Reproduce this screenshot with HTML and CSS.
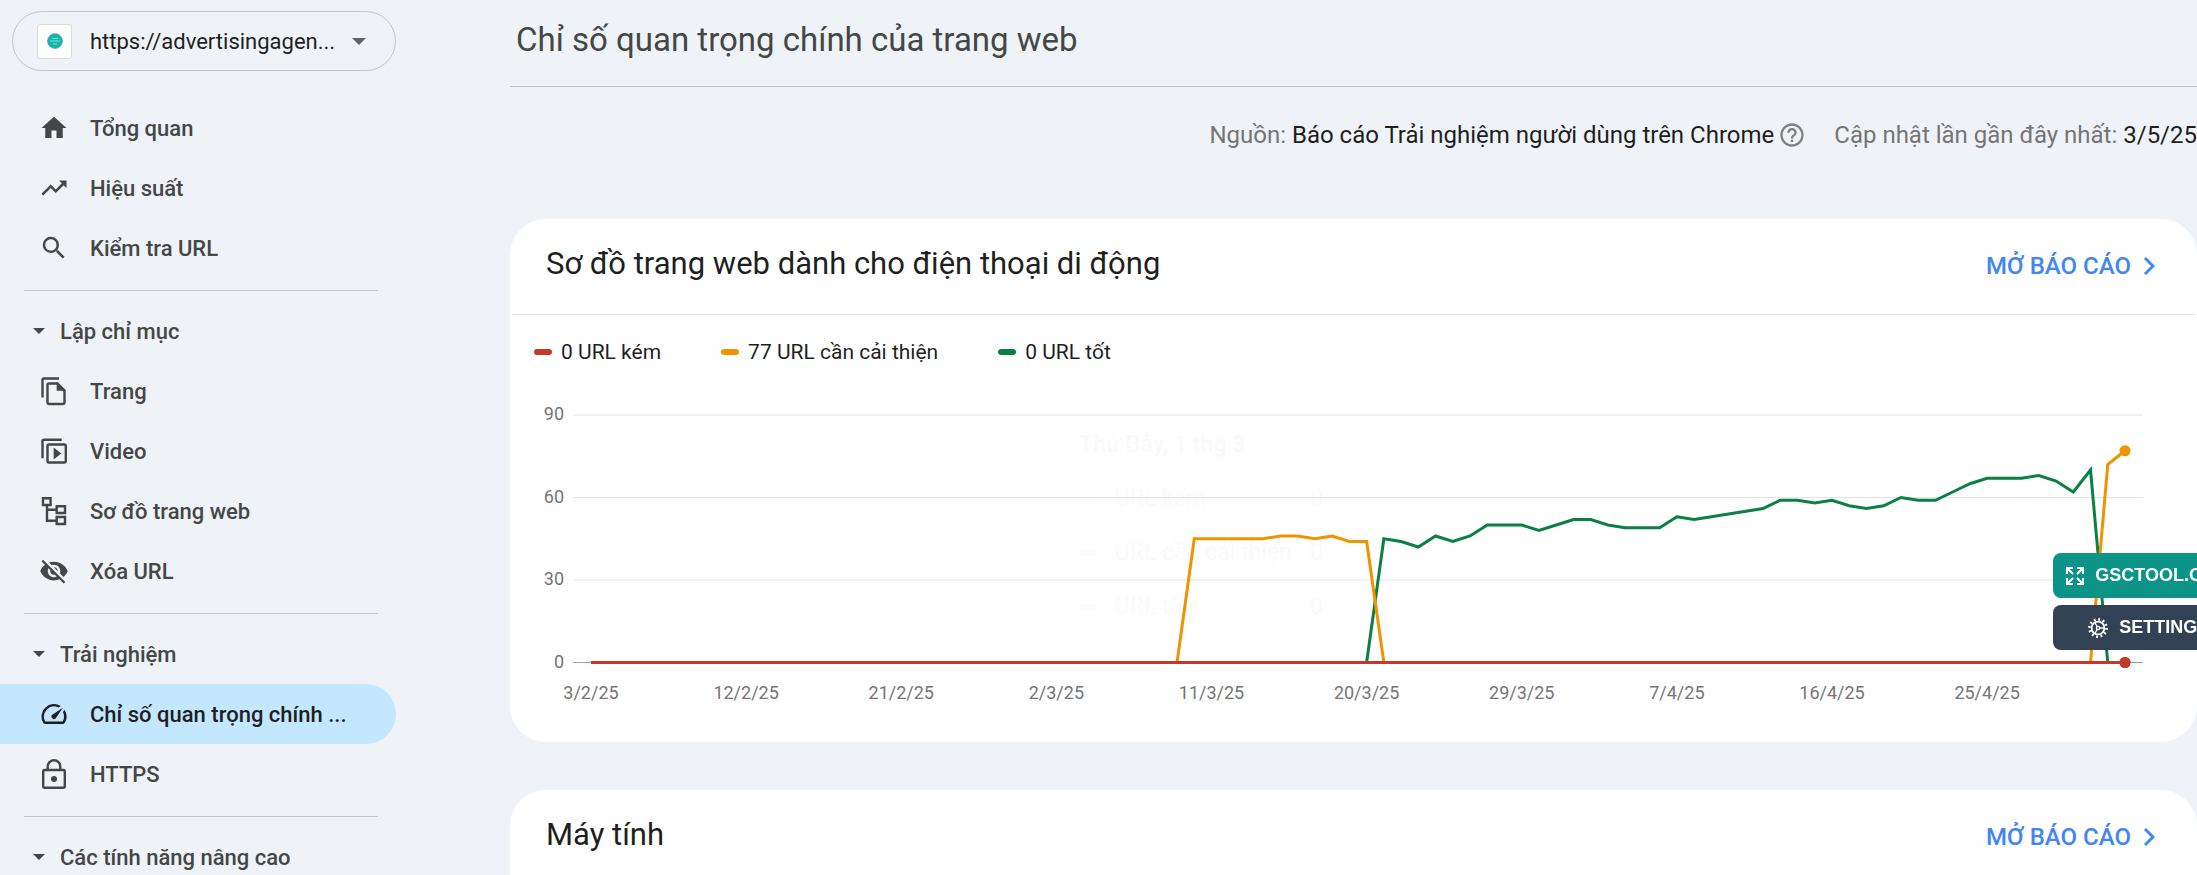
FILE: index.html
```html
<!DOCTYPE html>
<html lang="vi">
<head>
    <meta charset="utf-8">
    <title>Chỉ số quan trọng chính của trang web</title>
    <link rel="stylesheet" href="styles.css">
</head>
<body>
    <div class="layout">
        <aside class="sidebar">
            <button class="property" type="button">
                <span class="favicon">
                    <svg width="16" height="16" viewBox="0 0 16 16"><circle cx="8" cy="8" r="7.5" fill="#12b8a6" stroke="#7c9fd0" stroke-width="0.8"/><path d="M3 8h10M5 5.5h6M6 11h4" stroke="#7fe0d6" stroke-width="1"/></svg>
                </span>
                <span class="property-name">https://advertisingagen...</span>
                <span class="caret"></span>
            </button>

            <nav>
                <ul>
                    <li><a href="#"><svg class="icon" viewBox="0 0 24 24"><path d="M10 20v-6h4v6h5v-8h3L12 3 2 12h3v8z"/></svg>Tổng quan</a></li>
                    <li><a href="#"><svg class="icon" viewBox="0 0 24 24"><path d="M16 6l2.29 2.29-4.88 4.88-4-4L2 16.59 3.41 18l6-6 4 4 6.3-6.29L22 12V6z"/></svg>Hiệu suất</a></li>
                    <li><a href="#"><svg class="icon" viewBox="0 0 24 24"><path d="M15.5 14h-.79l-.28-.27A6.47 6.47 0 0 0 16 9.5 6.5 6.5 0 1 0 9.5 16c1.61 0 3.09-.59 4.23-1.57l.27.28v.79l5 4.99L20.49 19l-4.99-5zm-6 0C7.01 14 5 11.99 5 9.5S7.01 5 9.5 5 14 7.01 14 9.5 11.99 14 9.5 14z"/></svg>Kiểm tra URL</a></li>
                </ul>
                <hr>
                <button class="group" type="button"><span class="caret small"></span>Lập chỉ mục</button>
                <ul>
                    <li><a href="#"><svg class="icon line" viewBox="0 0 30 30"><path d="M20 2.5H5A1.5 1.5 0 0 0 3.5 4v17.5"/><path d="M18.5 7.5H10A1.5 1.5 0 0 0 8.5 9v17.5A1.5 1.5 0 0 0 10 28h14a1.5 1.5 0 0 0 1.5-1.5V14.5z"/><path class="solid" d="M17.7 6.5v8.2h8.5z"/></svg>Trang</a></li>
                    <li><a href="#"><svg class="icon line" viewBox="0 0 30 30"><path d="M22.7 3.8H5A1.5 1.5 0 0 0 3.5 5.3v17"/><rect x="8.5" y="8.5" width="18.3" height="18" rx="1.5"/><path class="solid" d="M14.7 11.5v12l7.6-6z"/></svg>Video</a></li>
                    <li><a href="#"><svg class="icon line" viewBox="0 0 30 30"><path d="M4 2.3h7.6v6.7H4zM17.7 10.3h8.3v6.7h-8.3zM17.7 21h8.3v7h-8.3zM8 9v15.7h9.7M8 13.7h9.7"/></svg>Sơ đồ trang web</a></li>
                    <li><a href="#"><svg class="icon" viewBox="0 0 24 24"><path d="M12 7c2.76 0 5 2.24 5 5 0 .65-.13 1.26-.36 1.83l2.92 2.92c1.51-1.26 2.7-2.89 3.43-4.75-1.73-4.39-6-7.5-11-7.5-1.4 0-2.74.25-3.98.7l2.16 2.16C10.74 7.13 11.35 7 12 7zM2 4.27l2.28 2.28.46.46A11.8 11.8 0 0 0 1 12c1.73 4.39 6 7.5 11 7.5 1.55 0 3.03-.3 4.38-.84l.42.42L19.73 22 21 20.73 3.27 3 2 4.27zM7.53 9.8l1.55 1.55c-.05.21-.08.43-.08.65 0 1.66 1.34 3 3 3 .22 0 .44-.03.65-.08l1.55 1.55c-.67.33-1.41.53-2.2.53-2.76 0-5-2.24-5-5 0-.79.2-1.53.53-2.2zm4.31-.78l3.15 3.15.02-.16c0-1.66-1.34-3-3-3l-.17.01z"/></svg>Xóa URL</a></li>
                </ul>
                <hr>
                <button class="group" type="button"><span class="caret small"></span>Trải nghiệm</button>
                <ul>
                    <li><a class="active" href="#"><svg class="icon" viewBox="0 0 24 24"><path d="M20.38 8.57l-1.23 1.85a8 8 0 0 1-.22 7.58H5.07A8 8 0 0 1 15.58 6.85l1.85-1.23A10 10 0 0 0 3.35 19a2 2 0 0 0 1.72 1h13.85a2 2 0 0 0 1.74-1 10 10 0 0 0-.27-10.44zM10.59 15.41a2 2 0 0 0 2.83 0l5.66-8.49-8.49 5.66a2 2 0 0 0 0 2.83z"/></svg>Chỉ số quan trọng chính ...</a></li>
                    <li><a href="#"><svg class="icon line" viewBox="0 0 30 30"><rect x="4.2" y="11" width="21.6" height="17.8" rx="1.5"/><path d="M8.7 11V7.5a6.3 6.3 0 0 1 12.6 0V11"/><circle class="solid" cx="15" cy="20" r="3"/></svg>HTTPS</a></li>
                </ul>
                <hr>
                <button class="group" type="button"><span class="caret small"></span>Các tính năng nâng cao</button>
            </nav>
        </aside>

        <main>
            <header>
                <h1>Chỉ số quan trọng chính của trang web</h1>
            </header>

            <div class="info">
                <span>Nguồn: <b>Báo cáo Trải nghiệm người dùng trên Chrome</b></span>
                <svg class="help" viewBox="0 0 24 24"><path d="M11 18h2v-2h-2v2zm1-16C6.48 2 2 6.48 2 12s4.48 10 10 10 10-4.48 10-10S17.52 2 12 2zm0 18c-4.41 0-8-3.59-8-8s3.59-8 8-8 8 3.59 8 8-3.59 8-8 8zm0-14c-2.21 0-4 1.79-4 4h2c0-1.1.9-2 2-2s2 .9 2 2c0 2-3 1.75-3 5h2c0-2.25 3-2.5 3-5 0-2.21-1.79-4-4-4z"/></svg>
                <span>Cập nhật lần gần đây nhất: <b>3/5/25</b></span>
            </div>

            <section class="card">
                <div class="card-header">
                    <h2>Sơ đồ trang web dành cho điện thoại di động</h2>
                    <a class="open" href="#">MỞ BÁO CÁO<svg width="12" height="20" viewBox="0 0 12 20"><path d="M2 2l8 8-8 8"/></svg></a>
                </div>
                <ul class="legend">
                    <li class="poor">0 URL kém</li>
                    <li class="improve">77 URL cần cải thiện</li>
                    <li class="good">0 URL tốt</li>
                </ul>
                <div class="chart">
                    <svg id="chart"></svg>
                    <div class="tooltip">
                        <strong>Thứ Bảy, 1 thg 3</strong>
                        <p class="poor">URL kém<span>0</span></p>
                        <p class="improve">URL cần cải thiện<span>0</span></p>
                        <p class="good">URL tốt<span>0</span></p>
                    </div>
                </div>
            </section>

            <section class="card">
                <div class="card-header">
                    <h2>Máy tính</h2>
                    <a class="open" href="#">MỞ BÁO CÁO<svg width="12" height="20" viewBox="0 0 12 20"><path d="M2 2l8 8-8 8"/></svg></a>
                </div>
            </section>
        </main>
    </div>

    <div class="tools">
        <button class="tool teal" type="button">
            <svg width="18" height="18" viewBox="0 0 18 18"><path d="M1 7V1h6M11 1h6v6M17 11v6h-6M7 17H1v-6M1 1l6 6M17 1l-6 6M17 17l-6-6M1 17l6-6" fill="none" stroke="#fff" stroke-width="2"/></svg>
            GSCTOOL.COM
        </button>
        <button class="tool dark" type="button">
            <svg width="20" height="20" viewBox="0 0 20 20" fill="none" stroke="#fff"><circle cx="10" cy="10" r="6.4" stroke-width="1.8"/><circle cx="10" cy="10" r="8.6" stroke-width="2.6" stroke-dasharray="1.8 2.703"/><path d="M11.5 10H16M9.2 8.7L7 4.8M9.2 11.3L7 15.2" stroke-width="1.3"/><circle cx="10" cy="10" r="1.6" stroke-width="1.2"/></svg>
            SETTINGS
        </button>
    </div>

    <script src="chart.js"></script>
</body>
</html>
```

FILE: styles.css
```css
* {
    box-sizing: border-box;
}

body {
    margin: 0;
    background-color: #eff3f8;
    color: #1f1f1f;
    font-family: Roboto, "Noto Sans", sans-serif;
    overflow: hidden;
}

ul {
    list-style: none;
    margin: 0;
    padding: 0;
}

a {
    text-decoration: none;
}

button {
    font-family: inherit;
    cursor: pointer;
}

.layout {
    display: flex;
    gap: 114px;
}

/* Sidebar */
.sidebar {
    flex: 0 0 396px;
    padding-top: 11px;
    font-size: 22px;
    color: #444746;
}

.property {
    display: flex;
    align-items: center;
    width: 384px;
    height: 60px;
    margin: 0 0 27px 12px;
    padding: 0 29px 0 24px;
    border: 1px solid #c4c7c5;
    border-radius: 30px;
    background: none;
    color: #1f1f1f;
    font-size: 22px;
}

.favicon {
    display: flex;
    align-items: center;
    justify-content: center;
    width: 35px;
    height: 35px;
    margin-right: 18px;
    background: #fff;
    border: 1px solid #dadce0;
    border-radius: 3px;
}

.property-name {
    flex: 1;
    text-align: left;
}

.caret {
    border: 7px solid transparent;
    border-top-color: #5f6368;
    border-bottom: 0;
}

.caret.small {
    border-width: 6px;
    border-bottom: 0;
    border-top-color: #444746;
}

nav a {
    display: flex;
    align-items: center;
    gap: 21px;
    height: 60px;
    padding-left: 39px;
    border-radius: 0 30px 30px 0;
    color: #444746;
    font-weight: 500;
}

nav a.active {
    background: #c2e7ff;
    color: #1f1f1f;
}

nav hr {
    height: 1px;
    margin: 12px 18px 10px 24px;
    border: 0;
    background: #c4c7c5;
}

.group {
    display: flex;
    align-items: center;
    gap: 15px;
    width: 100%;
    height: 60px;
    padding: 0 0 0 33px;
    border: 0;
    background: none;
    color: #444746;
    font-size: 22px;
    font-weight: 500;
}

.icon {
    width: 30px;
    height: 30px;
    fill: currentColor;
}

.icon.line {
    fill: none;
    stroke: currentColor;
    stroke-width: 2.4;
}

.icon .solid {
    fill: currentColor;
    stroke: none;
}

/* Content */
main {
    flex: 1;
    min-width: 0;
}

header {
    height: 87px;
    padding-left: 6px;
    border-bottom: 1px solid #c4c7c5;
}

h1 {
    margin: 0;
    font-size: 33px;
    font-weight: 400;
    line-height: 80px;
    color: #444746;
}

.info {
    display: flex;
    justify-content: flex-end;
    align-items: center;
    height: 96px;
    margin-bottom: 36px;
    white-space: nowrap;
    font-size: 24px;
    color: #757575;
}

.info b {
    font-weight: 400;
    color: #1f1f1f;
}

.help {
    width: 28px;
    height: 28px;
    margin: 0 28px 0 4px;
    fill: #808080;
}

.card {
    min-height: 300px;
    margin-bottom: 48px;
    padding: 0 2px;
    background: #fff;
    border-radius: 36px;
}

.card-header {
    display: flex;
    justify-content: space-between;
    align-items: center;
    height: 96px;
    padding: 0 40px 2px 34px;
    border-bottom: 1px solid #e0e0e0;
}

h2 {
    margin: 0;
    padding-bottom: 4px;
    font-size: 31px;
    font-weight: 400;
}

.open {
    display: flex;
    align-items: center;
    gap: 12px;
    color: #4285f4;
    font-size: 24px;
    font-weight: 500;
}

.open svg {
    fill: none;
    stroke: #4285f4;
    stroke-width: 3;
}

.legend {
    display: flex;
    gap: 60px;
    padding: 24px 22px 0;
    font-size: 21px;
    line-height: 26px;
}

.legend li {
    display: flex;
    align-items: center;
    gap: 9px;
}

.legend li::before,
.tooltip p::before {
    content: "";
    width: 18px;
    height: 6px;
    border-radius: 3px;
}

.poor::before {
    background: #c53929;
}

.improve::before {
    background: #f09300;
}

.good::before {
    background: #0b8043;
}

.chart {
    position: relative;
    height: 377px;
}

#chart {
    display: block;
    width: 100%;
    height: 100%;
    font-size: 18px;
}

#chart text {
    fill: #757575;
}

/* fading out */
.tooltip {
    position: absolute;
    left: 567px;
    top: 65px;
    width: 244px;
    opacity: 0.015;
    color: #000;
    font-size: 23px;
    line-height: 30px;
}

.tooltip p {
    display: flex;
    align-items: center;
    gap: 18px;
    margin: 24px 0 0;
}

.tooltip span {
    margin-left: auto;
}

/* Extension buttons, stick out over the right edge */
.tools {
    position: fixed;
    top: 553px;
    right: -47px;
    display: flex;
    flex-direction: column;
    gap: 7px;
}

.tool {
    display: flex;
    align-items: center;
    justify-content: center;
    gap: 11px;
    height: 45px;
    padding: 0 13px;
    border: 0;
    border-radius: 8px;
    color: #fff;
    font: bold 18px "Liberation Sans", Arial, sans-serif;
}

.teal {
    background: #0d9488;
}

.dark {
    background: #334155;
}
```

FILE: chart.js
```js
const svg = document.getElementById("chart");

function zeros(n) {
    return new Array(n).fill(0);
}

// one value per day, 3/2/25 - 3/5/25
const poor = zeros(90);
const improve = [
    ...zeros(35), 45, 45, 45, 45, 45, 46, 46, 45, 46, 44, 44,
    ...zeros(42), 72, 77
];
const good = [
    ...zeros(46), 45, 44, 42, 46, 44, 46, 50, 50, 50, 48, 50, 52, 52, 50, 49, 49, 49,
    53, 52, 53, 54, 55, 56, 59, 59, 58, 59, 57, 56, 57, 60, 59, 59,
    62, 65, 67, 67, 67, 68, 66, 62, 70, 0, 0
];
const dates = ["3/2/25", "12/2/25", "21/2/25", "2/3/25", "11/3/25", "20/3/25", "29/3/25", "7/4/25", "16/4/25", "25/4/25"];

const left = 61;
const zeroY = 297.5;
const unit = 2.75;

function draw() {
    const right = svg.clientWidth - 52;
    const x = day => left + 18 + day * (right - left - 36) / 89;
    const y = value => zeroY - value * unit;
    let out = "";

    for (const value of [0, 30, 60, 90]) {
        out += `<path d="M${left} ${y(value)}H${right}" stroke="${value ? "#e4e4e4" : "#9e9e9e"}"/>`;
        out += `<text x="${left - 9}" y="${y(value) + 5}" text-anchor="end">${value}</text>`;
    }
    dates.forEach((date, i) => {
        out += `<text x="${x(i * 9)}" y="${zeroY + 36}" text-anchor="middle">${date}</text>`;
    });

    function line(data, color) {
        const points = data.map((value, day) => `${x(day)},${y(value)}`).join(" ");
        out += `<polyline points="${points}" fill="none" stroke="${color}" stroke-width="3"/>`;
        out += `<circle cx="${x(89)}" cy="${y(data[89])}" r="5.5" fill="${color}"/>`;
    }
    line(good, "#0b8043");
    line(improve, "#f09300");
    line(poor, "#c53929");

    svg.innerHTML = out;
}

draw();
window.addEventListener("resize", draw);
```
